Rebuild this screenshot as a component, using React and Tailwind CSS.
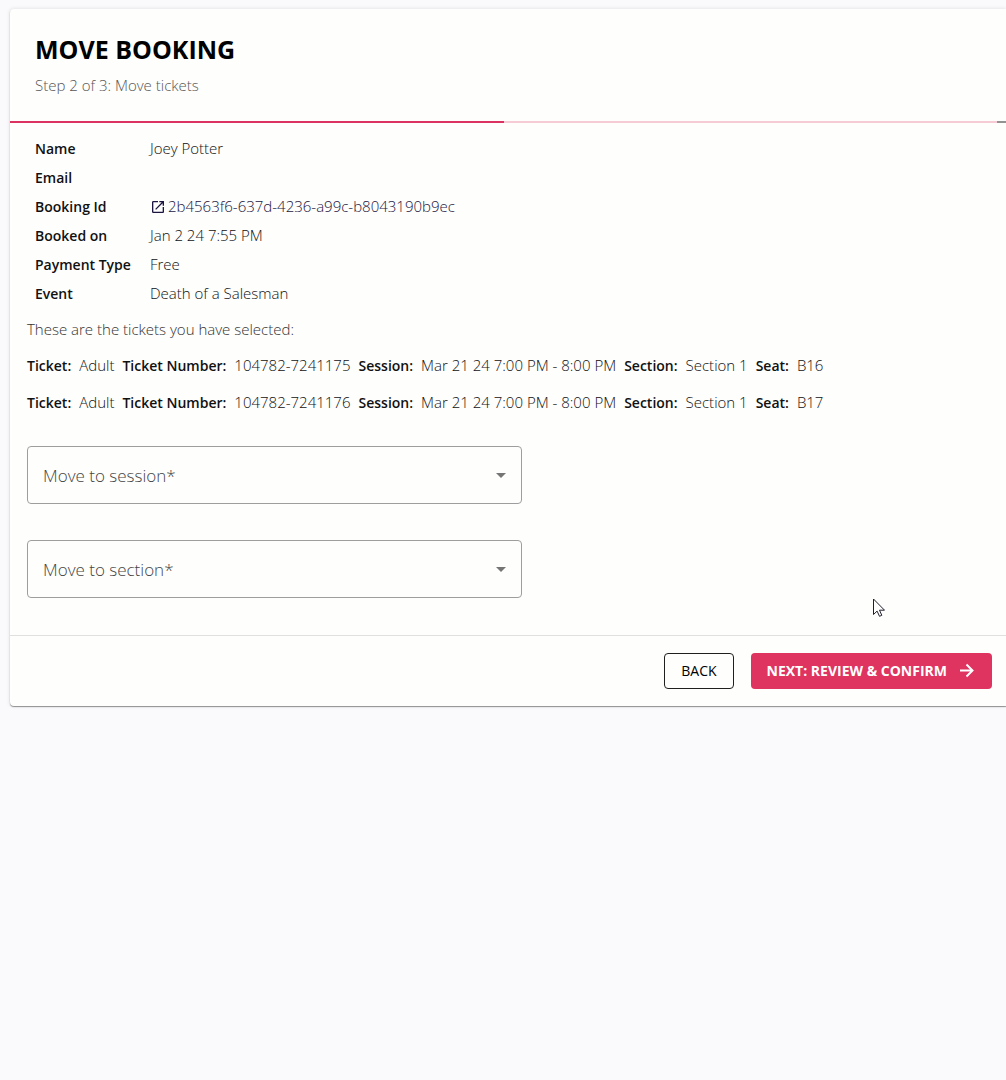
import React, { useState } from "react";

const booking = [
  { label: "Name", value: "Joey Potter" },
  { label: "Email", value: "" },
  { label: "Booking Id", value: "2b4563f6-637d-4236-a99c-b8043190b9ec", link: true },
  { label: "Booked on", value: "Jan 2 24 7:55 PM" },
  { label: "Payment Type", value: "Free" },
  { label: "Event", value: "Death of a Salesman" },
];

const tickets = [
  { type: "Adult", number: "104782-7241175", session: "Mar 21 24 7:00 PM - 8:00 PM", section: "Section 1", seat: "B16" },
  { type: "Adult", number: "104782-7241176", session: "Mar 21 24 7:00 PM - 8:00 PM", section: "Section 1", seat: "B17" },
];

export default function App() {
  const [session, setSession] = useState("");
  const [section, setSection] = useState("");

  return (
    <div className="min-h-screen bg-[#fafafc] pt-[9px] pl-[10px] font-['Open_Sans',sans-serif] text-[15px] text-[#111]">
      <main className="rounded-l bg-[#fefefd] shadow-[0_1px_1px_rgba(0,0,0,0.4),0_0_4px_rgba(0,0,0,0.12)]">
        {/* Header */}
        <header className="px-[25px] pt-[22px] pb-[25px]">
          <h1 className="text-[25px] leading-9 font-bold text-black">MOVE BOOKING</h1>
          <p className="mt-[7px] leading-[22px] font-light text-[#555]">Step 2 of 3: Move tickets</p>
        </header>

        <StepBar />

        {/* Booking details */}
        <table className="mt-[11px] ml-[25px] border-collapse text-left">
          <tbody>
            {booking.map((row) => (
              <tr key={row.label} className="h-[29px]">
                <th scope="row" className="w-[115px] p-0 text-sm font-semibold whitespace-nowrap">{row.label}</th>
                <td className="p-0 font-light">
                  {row.link ? (
                    <a href="#booking" className="flex items-center gap-1 text-[#1c1540]">
                      <OpenIcon className="ml-0.5 h-3 w-3" />
                      {row.value}
                    </a>
                  ) : (
                    row.value
                  )}
                </td>
              </tr>
            ))}
          </tbody>
        </table>

        {/* Selected tickets */}
        <section className="px-[17px] pt-2.5 pb-[37px]">
          <p className="leading-[22px] font-light text-[#333]">These are the tickets you have selected:</p>
          {tickets.map((ticket) => (
            <p key={ticket.number} className="mt-3.5 flex flex-wrap gap-x-2 leading-[22px]">
              <Field label="Ticket:" value={ticket.type} />
              <Field label="Ticket Number:" value={ticket.number} />
              <Field label="Session:" value={ticket.session} />
              <Field label="Section:" value={ticket.section} />
              <Field label="Seat:" value={ticket.seat} />
            </p>
          ))}

          <div className="mt-8 flex max-w-[495px] flex-col gap-9">
            <MoveSelect id="session" label="Move to session*" value={session} onChange={setSession} options={["Mar 21 24 7:00 PM - 8:00 PM"]} />
            <MoveSelect id="section" label="Move to section*" value={section} onChange={setSection} options={["Section 1"]} />
          </div>
        </section>

        {/* Actions */}
        <footer className="flex justify-end gap-[17px] border-t border-[#e0e0e0] py-[17px] pr-3.5">
          <button type="button" className="h-9 rounded border border-[#1f1f1f] px-4 text-sm font-medium text-black">
            BACK
          </button>
          <button type="button" className="flex h-9 items-center gap-[9px] rounded bg-[#df3360] px-4 text-sm font-bold text-white">
            NEXT: REVIEW &amp; CONFIRM
            <ArrowIcon className="h-5 w-5" />
          </button>
        </footer>
      </main>

      <Pointer className="absolute top-[598px] left-[873px] h-[19px] w-3" />
    </div>
  );
}

function StepBar() {
  return (
    <div className="flex h-0.5">
      <div className="flex-1 bg-[#dc3261]" />
      <div className="flex-1 bg-[#f6cbd5]" />
      <div className="w-[9px] bg-[#929292]" />
    </div>
  );
}

function Field({ label, value }) {
  return (
    <span className="flex items-baseline gap-2">
      <span className="text-sm leading-[22px] font-semibold">{label}</span>
      <span className="font-light">{value}</span>
    </span>
  );
}

function MoveSelect({ id, label, value, onChange, options }) {
  return (
    <div className="relative">
      <select
        id={id}
        value={value}
        onChange={(e) => onChange(e.target.value)}
        className="block h-[58px] w-full appearance-none rounded border border-[#9e9e9e] bg-transparent px-[15px] text-base"
      >
        <option value=""></option>
        {options.map((option) => (
          <option key={option}>{option}</option>
        ))}
      </select>
      {!value && (
        <label htmlFor={id} className="pointer-events-none absolute inset-y-0 left-4 flex items-center pt-0.5 text-[17px] font-light text-[#444]">
          {label}
        </label>
      )}
      <svg viewBox="0 0 10 5" className="pointer-events-none absolute inset-y-0 right-4 my-auto h-[5px] w-2.5" fill="#757575">
        <path d="M0 0h10L5 5z" />
      </svg>
    </div>
  );
}

function OpenIcon(props) {
  return (
    <svg {...props} viewBox="3 3 18 18" fill="currentColor">
      <path d="M19 19H5V5h7V3H5a2 2 0 0 0-2 2v14a2 2 0 0 0 2 2h14c1.1 0 2-.9 2-2v-7h-2v7zM14 3v2h3.59l-9.83 9.83 1.41 1.41L19 6.41V10h2V3h-7z" />
    </svg>
  );
}

function ArrowIcon(props) {
  return (
    <svg {...props} viewBox="0 0 20 20" fill="none" stroke="currentColor" strokeWidth={2}>
      <path d="M4 9.5h12.5M10.5 3.5l6 6-6 6" />
    </svg>
  );
}

function Pointer(props) {
  return (
    <svg {...props} viewBox="0 0 12 19" fill="#fff" stroke="#1f1f2b" strokeWidth={1}>
      <path d="M.5 1v15.5l3.6-3.4 2.4 5.2 2.3-1-2.3-5.1h5z" />
    </svg>
  );
}
